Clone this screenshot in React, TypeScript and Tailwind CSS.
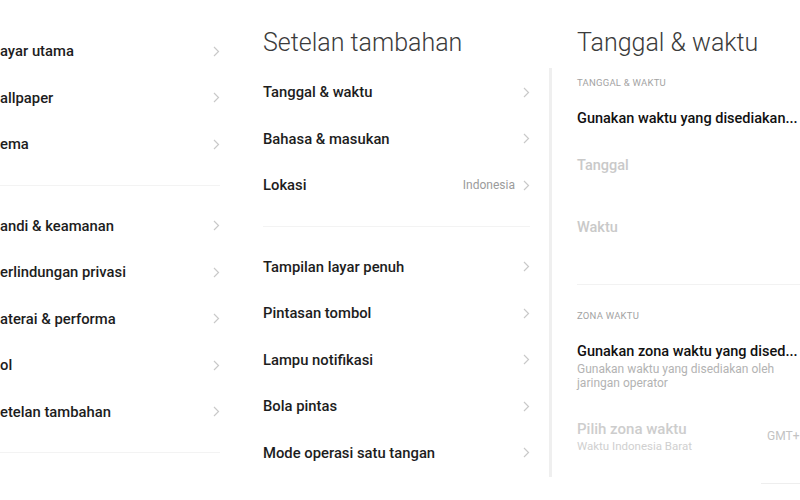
import React from "react";

function Chevron() {
  return (
    <svg width="7" height="11" viewBox="0 0 7 11" className="shrink-0">
      <path d="M1 1l4.5 4.5L1 10" fill="none" stroke="#c9c9c9" strokeWidth="1.2" />
    </svg>
  );
}

function Row({ label, value }: { label: string; value?: string }) {
  return (
    <div className="h-[46.5px] flex items-center justify-between">
      <span className="text-[14.8px] font-medium text-[#1d1d1d] whitespace-nowrap">{label}</span>
      <div className="flex items-center gap-[8px]">
        {value && <span className="text-[12px] text-[#9b9b9b]">{value}</span>}
        <Chevron />
      </div>
    </div>
  );
}

function Divider() {
  return (
    <div className="py-[17px]">
      <div className="h-px bg-[#f3f3f3]" />
    </div>
  );
}

export default function App() {
  return (
    <div
      className="w-[800px] h-[500px] overflow-hidden bg-white flex"
      style={{ fontFamily: "Roboto, 'Noto Sans', sans-serif" }}
    >
      {/* left: main settings list, cropped */}
      <div className="w-[240px] shrink-0 pt-[28px] pr-[20px]">
        <Row label="ayar utama" />
        <Row label="allpaper" />
        <Row label="ema" />
        <Divider />
        <Row label="andi & keamanan" />
        <Row label="erlindungan privasi" />
        <Row label="aterai & performa" />
        <Row label="ol" />
        <Row label="etelan tambahan" />
        <Divider />
      </div>

      {/* middle: Setelan tambahan */}
      <div className="w-[309px] shrink-0 pl-[23px] pr-[19px]">
        <div className="h-[69px] pt-[26px]">
          <h1 className="text-[25px] leading-[34px] font-light text-[#3b3b3b] whitespace-nowrap">Setelan tambahan</h1>
        </div>
        <Row label="Tanggal & waktu" />
        <Row label="Bahasa & masukan" />
        <Row label="Lokasi" value="Indonesia" />
        <Divider />
        <Row label="Tampilan layar penuh" />
        <Row label="Pintasan tombol" />
        <Row label="Lampu notifikasi" />
        <Row label="Bola pintas" />
        <Row label="Mode operasi satu tangan" />
      </div>

      {/* right: Tanggal & waktu */}
      <div className="w-[290px] shrink-0">
        <div className="h-[68px] pt-[26px] pl-[28px]">
          <h1 className="text-[25px] leading-[34px] font-light text-[#3b3b3b] whitespace-nowrap">Tanggal &amp; waktu</h1>
        </div>
        <div className="flex h-[409px]">
          <div className="w-[3px] bg-[#efefef]" />
          <div className="flex-1 pl-[25px]">
            <div className="h-[30px] flex items-center text-[9.5px] text-[#a3a3a3] tracking-wide">TANGGAL &amp; WAKTU</div>
            <div className="h-[42px] flex items-center text-[14.5px] font-medium text-[#111] whitespace-nowrap">
              Gunakan waktu yang disediakan...
            </div>
            <div className="h-[52px] flex items-center text-[14.5px] font-medium text-[#c9c9c9]">Tanggal</div>
            <div className="h-[72px] flex items-center text-[14.5px] font-medium text-[#c9c9c9]">Waktu</div>
            <div className="h-[20px]" />
            <div className="h-px bg-[#f2f2f2]" />
            <div className="h-[16px]" />
            <div className="h-[30px] flex items-center text-[9.5px] text-[#a3a3a3] tracking-wide">ZONA WAKTU</div>
            <div className="pt-[11px]">
              <div className="text-[14.5px] leading-[20px] font-medium text-[#111] whitespace-nowrap">
                Gunakan zona waktu yang dised...
              </div>
              <div className="text-[12px] leading-[14px] text-[#b3b3b3] w-[205px]">
                Gunakan waktu yang disediakan oleh jaringan operator
              </div>
            </div>
            <div className="mt-[29px] flex items-center">
              <div className="w-[190px] shrink-0">
                <div className="text-[15px] leading-[20px] font-medium text-[#cdcdcd]">Pilih zona waktu</div>
                <div className="text-[11.5px] leading-[14px] text-[#d0d0d0]">Waktu Indonesia Barat</div>
              </div>
              <span className="text-[12px] text-[#c3c3c3] whitespace-nowrap">GMT+</span>
            </div>
          </div>
        </div>
        <div className="mt-[6px] ml-[212px] w-[40px] h-px bg-[#eeeeee]" />
      </div>
    </div>
  );
}
